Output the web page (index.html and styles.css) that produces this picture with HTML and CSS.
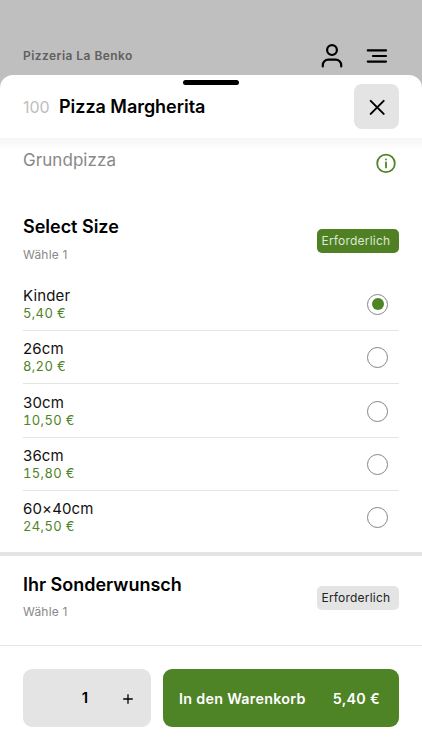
FILE: index.html
```html
<!DOCTYPE html>
<html lang="de">
<head>
<meta charset="utf-8">
<title>Pizza Margherita</title>
<link rel="stylesheet" href="styles.css">
</head>
<body>
<header class="topbar">
  <span class="shop">Pizzeria La Benko</span>
  <svg class="user" width="22" height="24" viewBox="0 0 22 24"><circle cx="11" cy="6.1" r="4.9"/><path d="M1.8 22.4v-1.3a5.4 5.4 0 0 1 5.4-5.4h7.6a5.4 5.4 0 0 1 5.4 5.4v1.3"/></svg>
  <svg class="menu" width="22" height="16" viewBox="0 0 22 16"><path d="M1.8 2.4h18.2M7 8h13M1.8 13.6h18.2"/></svg>
</header>
<main class="sheet">
  <div class="sheet-head">
    <i class="handle"></i>
    <span class="number">100</span>
    <h1>Pizza Margherita</h1>
    <button class="close" aria-label="Schließen"><svg width="18" height="18" viewBox="0 0 18 18"><path d="M2.7 2.9l13 13M15.7 2.9l-13 13"/></svg></button>
  </div>
  <section class="description">
    <p>Grundpizza</p>
    <svg width="20" height="20" viewBox="0 0 20 20"><circle cx="10" cy="10.4" r="8.8"/><path d="M10 9.4v5M10 6.3v.3"/></svg>
  </section>
  <section class="group sizes">
    <div class="group-head">
      <div><h2>Select Size</h2><p class="hint">Wähle 1</p></div>
      <span class="badge required">Erforderlich</span>
    </div>
    <ul class="options">
      <li><div><p class="name">Kinder</p><p class="price">5,40 €</p></div><i class="radio checked"></i></li>
      <li><div><p class="name">26cm</p><p class="price">8,20 €</p></div><i class="radio"></i></li>
      <li><div><p class="name">30cm</p><p class="price">10,50 €</p></div><i class="radio"></i></li>
      <li><div><p class="name">36cm</p><p class="price">15,80 €</p></div><i class="radio"></i></li>
      <li><div><p class="name">60×40cm</p><p class="price">24,50 €</p></div><i class="radio"></i></li>
    </ul>
  </section>
  <section class="group wishes">
    <div class="group-head">
      <div><h2>Ihr Sonderwunsch</h2><p class="hint">Wähle 1</p></div>
      <span class="badge">Erforderlich</span>
    </div>
  </section>
  <footer class="order">
    <div class="stepper"><span></span><b>1</b><svg width="10" height="10" viewBox="0 0 10 10"><path d="M5 .7v8.6M.7 5h8.6"/></svg></div>
    <button class="add"><span class="label">In den Warenkorb</span><span class="total">5,40 €</span></button>
  </footer>
</main>
</body>
</html>
```
FILE: styles.css
```css
* { box-sizing: border-box; }
body { margin: 0; width: 422px; height: 750px; overflow: hidden; background: #bfbfbf; color: #000; font-family: Inter, "Liberation Sans", sans-serif; }
h1, h2, p, ul { margin: 0; padding: 0; }
button { border: 0; padding: 0; font: inherit; color: inherit; }
svg { display: block; fill: none; stroke: #000; stroke-linecap: round; stroke-linejoin: round; stroke-width: 2; }
.topbar { height: 75px; padding: 37px 34px 0 23px; display: flex; align-items: center; }
.shop { flex: 1; font-size: 12px; font-weight: 600; line-height: 16px; letter-spacing: .45px; color: #606060; }
.topbar svg { stroke-width: 2.2; }
.menu { margin-left: 23px; }
.sheet { height: 675px; background: #fff; border-radius: 13px 13px 0 0; display: flex; flex-direction: column; }
.sheet-head { position: relative; height: 63px; flex: none; display: flex; align-items: center; padding: 0 23px; }
.sheet-head::after { content: ""; position: absolute; left: 0; right: 0; top: 63px; height: 12px; background: linear-gradient(#f5f5f5, #fff); }
.handle { position: absolute; left: 183px; top: 5px; width: 56px; height: 5px; border-radius: 3px; background: #000; }
.number { width: 36px; font-size: 16px; line-height: 22px; color: #bdbdbd; }
h1 { flex: 1; font-size: 18px; line-height: 24px; font-weight: 600; letter-spacing: -.04px; }
.close { width: 45px; height: 45px; border-radius: 8px; background: #e4e4e4; display: grid; place-items: center; }
.description { position: relative; z-index: 1; height: 77px; flex: none; padding: 10px 26px 0 23px; display: flex; justify-content: space-between; }
.description p { font-size: 17px; line-height: 24px; letter-spacing: .06px; color: #888; }
.description svg { margin-top: 5px; stroke: #4f8426; stroke-width: 1.8; overflow: visible; }
.group { padding: 0 23px; flex: none; }
.sizes { height: 341px; border-bottom: 4px solid #e4e4e4; }
.wishes { height: 90px; border-bottom: 1px solid #e4e4e4; }
.group-head { display: flex; justify-content: space-between; }
h2 { font-size: 18px; line-height: 24px; font-weight: 600; letter-spacing: -.02px; }
.hint { margin-top: 8px; font-size: 12px; line-height: 16px; letter-spacing: .2px; color: #888; }
.badge { width: 82px; height: 24px; border-radius: 5px; padding-left: 4.5px; font-size: 12px; line-height: 24px; letter-spacing: .2px; background: #e4e4e4; color: #222; margin-top: 14px; }
.badge.required { background: #4f8124; color: #dce7d4; }
.wishes .group-head { padding-top: 16px; }
.wishes h2 { padding-top: 1px; }
.wishes .hint { margin-top: 7px; }
.options { list-style: none; margin-top: 14.5px; }
.options li { height: 53.35px; padding: 1.6px 11px 0 0; display: flex; align-items: center; justify-content: space-between; border-bottom: 1px solid #e4e4e4; }
.options li:last-child { border-bottom-color: transparent; }
.name { font-size: 15px; line-height: 18px; letter-spacing: .15px; color: #111; }
.price { font-size: 13px; line-height: 17px; letter-spacing: .35px; font-variant-numeric: tabular-nums; color: #4f8426; }
.radio { width: 21px; height: 21px; border: 1px solid #858585; border-radius: 50%; display: grid; place-items: center; }
.checked::after { content: ""; width: 12px; height: 12px; border-radius: 50%; background: #4f8426; }
.order { padding: 23px 23px 0; display: grid; grid-template-columns: 128px 236px; gap: 12px; }
.stepper, .add { height: 58px; border-radius: 9px; }
.stepper { background: #e4e4e4; display: grid; grid-template-columns: 43px 38px 48px; align-items: center; justify-items: center; }
.stepper b { font-size: 15px; font-weight: 600; line-height: 20px; }
.stepper svg { stroke-width: 1.3; margin-top: 1px; }
.add { background: #4f8426; color: #fff; padding: 1px 19px 0 16px; display: flex; align-items: center; justify-content: space-between; font-size: 14.3px; font-weight: 600; letter-spacing: .3px; }
```
